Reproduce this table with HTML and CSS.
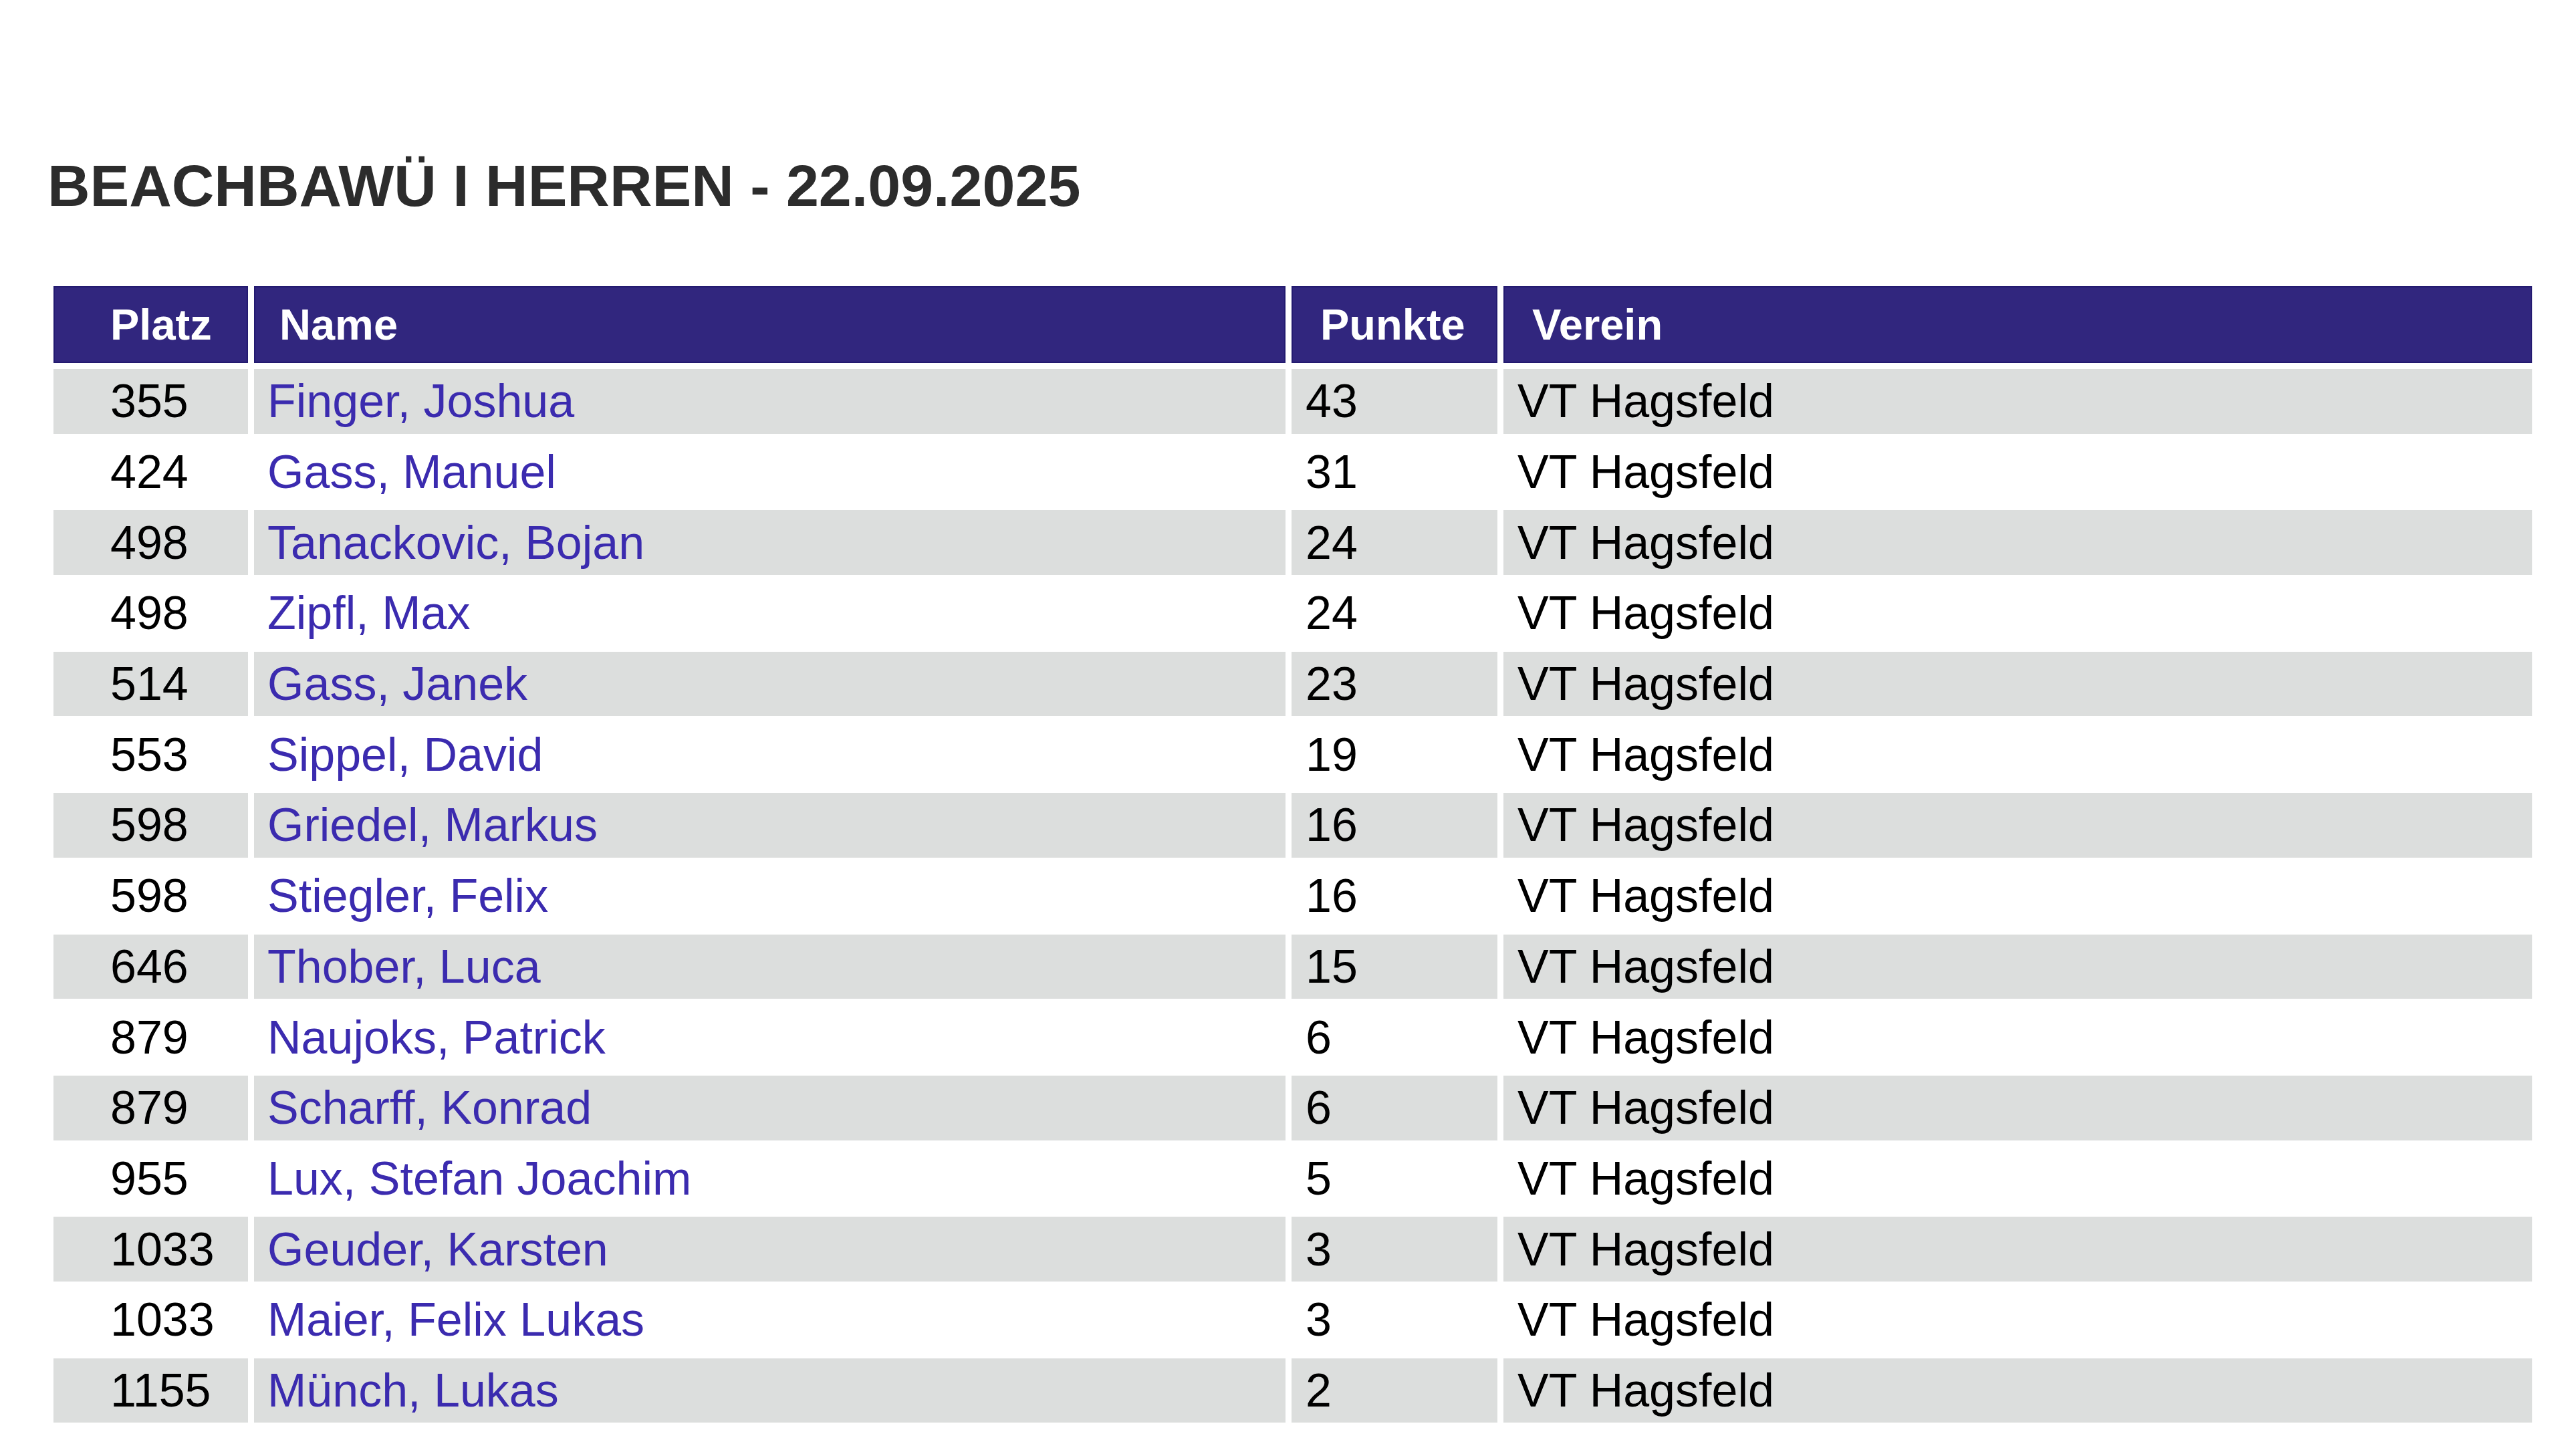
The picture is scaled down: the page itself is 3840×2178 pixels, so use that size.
FILE: index.html
```html
<!DOCTYPE html>
<html lang="de">
<head>
<meta charset="utf-8">
<title>BEACHBAWÜ I HERREN - 22.09.2025</title>
<link rel="stylesheet" href="styles.css">
</head>
<body>
<main class="page">
  <h1 class="title">BEACHBAWÜ I HERREN - 22.09.2025</h1>
  <table class="ranking">
    <thead>
      <tr>
        <th class="col-platz">Platz</th>
        <th class="col-name">Name</th>
        <th class="col-punkte">Punkte</th>
        <th class="col-verein">Verein</th>
      </tr>
    </thead>
    <tbody>
      <tr><td class="platz">355</td><td class="name"><a href="#">Finger, Joshua</a></td><td>43</td><td>VT Hagsfeld</td></tr>
      <tr><td class="platz">424</td><td class="name"><a href="#">Gass, Manuel</a></td><td>31</td><td>VT Hagsfeld</td></tr>
      <tr><td class="platz">498</td><td class="name"><a href="#">Tanackovic, Bojan</a></td><td>24</td><td>VT Hagsfeld</td></tr>
      <tr><td class="platz">498</td><td class="name"><a href="#">Zipfl, Max</a></td><td>24</td><td>VT Hagsfeld</td></tr>
      <tr><td class="platz">514</td><td class="name"><a href="#">Gass, Janek</a></td><td>23</td><td>VT Hagsfeld</td></tr>
      <tr><td class="platz">553</td><td class="name"><a href="#">Sippel, David</a></td><td>19</td><td>VT Hagsfeld</td></tr>
      <tr><td class="platz">598</td><td class="name"><a href="#">Griedel, Markus</a></td><td>16</td><td>VT Hagsfeld</td></tr>
      <tr><td class="platz">598</td><td class="name"><a href="#">Stiegler, Felix</a></td><td>16</td><td>VT Hagsfeld</td></tr>
      <tr><td class="platz">646</td><td class="name"><a href="#">Thober, Luca</a></td><td>15</td><td>VT Hagsfeld</td></tr>
      <tr><td class="platz">879</td><td class="name"><a href="#">Naujoks, Patrick</a></td><td>6</td><td>VT Hagsfeld</td></tr>
      <tr><td class="platz">879</td><td class="name"><a href="#">Scharff, Konrad</a></td><td>6</td><td>VT Hagsfeld</td></tr>
      <tr><td class="platz">955</td><td class="name"><a href="#">Lux, Stefan Joachim</a></td><td>5</td><td>VT Hagsfeld</td></tr>
      <tr><td class="platz">1033</td><td class="name"><a href="#">Geuder, Karsten</a></td><td>3</td><td>VT Hagsfeld</td></tr>
      <tr><td class="platz">1033</td><td class="name"><a href="#">Maier, Felix Lukas</a></td><td>3</td><td>VT Hagsfeld</td></tr>
      <tr><td class="platz">1155</td><td class="name"><a href="#">Münch, Lukas</a></td><td>2</td><td>VT Hagsfeld</td></tr>
    </tbody>
  </table>
</main>
</body>
</html>
```

FILE: styles.css
```css
html, body {
  margin: 0;
  padding: 0;
  background: #ffffff;
}

body {
  font-family: "Liberation Sans", Arial, Helvetica, sans-serif;
  color: #000000;
}

.page {
  padding: 228px 0 0 71px;
}

.title {
  margin: 0;
  font-size: 88px;
  line-height: 100px;
  font-weight: bold;
  color: #2c2c2c;
}

.ranking {
  margin-top: 91px;
  width: 3726px;
  table-layout: fixed;
  border-collapse: separate;
  border-spacing: 9px;
}

.ranking th,
.ranking td {
  box-sizing: border-box;
  text-align: left;
  vertical-align: middle;
  white-space: nowrap;
  padding-top: 0;
  padding-bottom: 0;
}

.ranking th {
  height: 115px;
  font-size: 65px;
  line-height: 111px;
  font-weight: bold;
  color: #ffffff;
  background: #31267e;
  border: 2px solid #231a70;
  padding-left: 41px;
}

.ranking th.col-platz {
  width: 291px;
  padding-left: 83px;
}

.ranking th.col-name {
  width: 1543px;
  padding-left: 36px;
}

.ranking th.col-punkte {
  width: 308px;
}

.ranking td {
  height: 96.7px;
  font-size: 70px;
  line-height: 96px;
  padding-left: 21px;
}

.ranking td.platz {
  padding-left: 85px;
}

.ranking td.name {
  padding-left: 20px;
}

.ranking tbody tr:nth-child(odd) td {
  background: #dcdedd;
}

.ranking a {
  color: #3b2baf;
  text-decoration: none;
}
```
